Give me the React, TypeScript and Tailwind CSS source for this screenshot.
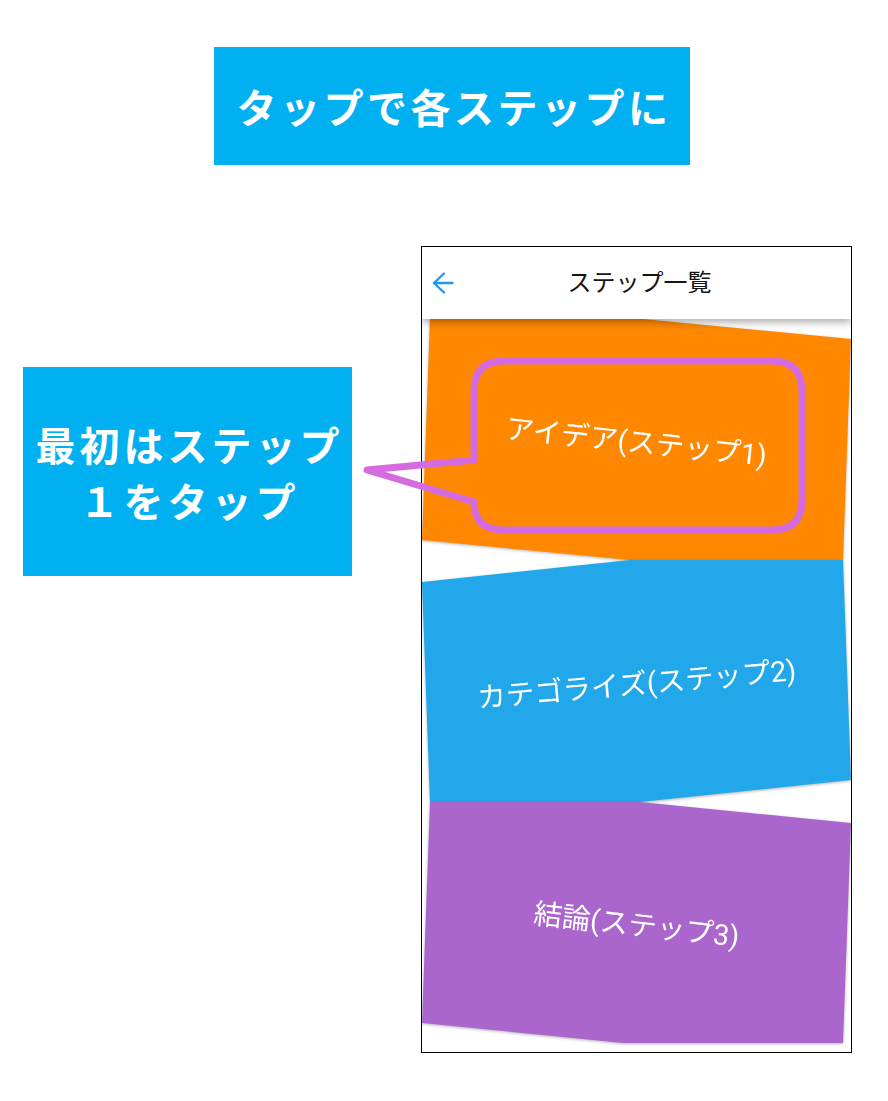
import type { JSX } from 'react';

interface StepCard {
  label: string;
  color: string;
  height: string;
  clip: string;
  tilt: string;
}

const steps: StepCard[] = [
  {
    label: 'アイデア(ステップ1)',
    color: 'bg-[#ff8800]',
    height: 'h-[241px]',
    clip: '[clip-path:polygon(8px_0,221px_0,429px_20px,421px_241px,208px_241px,0_221px)]',
    tilt: 'rotate-[6deg]',
  },
  {
    label: 'カテゴライズ(ステップ2)',
    color: 'bg-[#22a8ea]',
    height: 'h-[242px]',
    clip: '[clip-path:polygon(0_22px,208px_0,421px_0,429px_220px,218px_242px,8px_242px)]',
    tilt: 'rotate-[-5deg]',
  },
  {
    label: '結論(ステップ3)',
    color: 'bg-[#aa66cc]',
    height: 'h-[241px]',
    clip: '[clip-path:polygon(8px_0,218px_0,429px_21px,421px_241px,201px_241px,0_221px)]',
    tilt: 'rotate-[6.5deg]',
  },
];

function BackArrow(): JSX.Element {
  return (
    <svg width="22" height="24" viewBox="0 0 22 24" fill="none" stroke="#2196f3" strokeWidth="2.4" strokeLinecap="round" strokeLinejoin="round">
      <path d="M2 12H20.5" />
      <path d="M12 2.5 2 12l10 9.5" />
    </svg>
  );
}

function PhoneScreen(): JSX.Element {
  return (
    <div className="ml-[69px] flex h-[807px] w-[431px] flex-col overflow-hidden border border-black bg-white">
      <header className="relative z-10 flex h-[72px] shrink-0 items-center bg-white pl-[10px] shadow-[0_3px_8px_rgba(0,0,0,0.35)]">
        <BackArrow />
        <h1 className="flex-1 pr-[26px] text-center font-['Roboto','Noto_Sans_CJK_JP',sans-serif] text-[24px] font-normal text-[#151515]">
          ステップ一覧
        </h1>
      </header>

      <div className="flex flex-col">
        {steps.map((step) => (
          <div key={step.label} className="[filter:drop-shadow(0_1px_1.5px_rgba(0,0,0,0.3))]">
            <div
              className={`flex ${step.height} items-center justify-center ${step.color} ${step.clip} pt-[8px]`}
            >
              <span
                className={`${step.tilt} font-['Roboto','Noto_Sans_CJK_JP',sans-serif] text-[28.5px] font-normal whitespace-nowrap text-white`}
              >
                {step.label}
              </span>
            </div>
          </div>
        ))}
      </div>
    </div>
  );
}

export default function App(): JSX.Element {
  return (
    <div className="relative h-[1101px] w-[888px] overflow-hidden bg-white font-['Noto_Sans_CJK_JP',sans-serif]">
      <div className="ml-[214px] mt-[47px] flex h-[118px] w-[476px] items-center justify-center bg-[#00b0f0]">
        <span className="pl-[4px] text-[40px] font-bold leading-none tracking-[3.5px] text-white">
          タップで各ステップに
        </span>
      </div>

      <div className="mt-[81px] flex items-start pl-[23px]">
        <div className="mt-[121px] flex h-[209px] w-[329px] flex-col items-center justify-center bg-[#00b0f0] text-[40px] font-bold leading-[56px] tracking-[4px] text-white">
          <span className="pl-[4px]">最初はステップ</span>
          <span className="pl-[4px]">１をタップ</span>
        </div>
        <PhoneScreen />
      </div>

      {/* speech bubble drawn over the first card */}
      <svg
        className="pointer-events-none absolute left-0 top-0"
        width="888"
        height="1101"
        viewBox="0 0 888 1101"
        fill="none"
      >
        <path
          d="M474 460V391Q474 361 504 361H772Q802 361 802 391V500Q802 530 772 530H504Q474 530 474 502L367 470Z"
          stroke="#d66be0"
          strokeWidth="7"
          strokeLinejoin="round"
        />
      </svg>
    </div>
  );
}
